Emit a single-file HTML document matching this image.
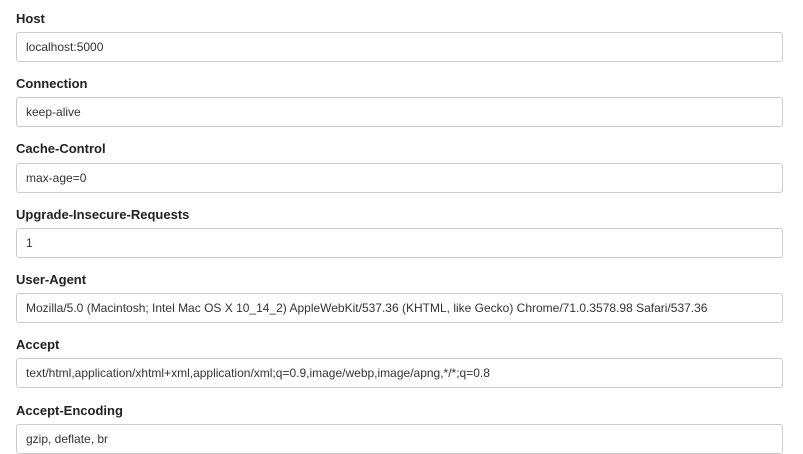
<!DOCTYPE html>
<html><head><style>
body{margin:0;width:803px;height:442px;overflow:hidden;background:#fff;font-family:"Liberation Sans",Arial,sans-serif;color:#222;position:relative}
.l{position:absolute;left:16px;font-size:13px;font-weight:bold;color:#222}
.i{position:absolute;left:16px;width:767px;border:1px solid #ccc;border-radius:3px;box-sizing:border-box;height:30px;font-size:12px;line-height:28px;padding-left:9px;color:#333}
</style></head><body>
<div class="l" style="top:11px">Host</div><div class="i" style="top:32px">localhost:5000</div>
<div class="l" style="top:76px">Connection</div><div class="i" style="top:97px">keep-alive</div>
<div class="l" style="top:141px">Cache-Control</div><div class="i" style="top:163px">max-age=0</div>
<div class="l" style="top:207px">Upgrade-Insecure-Requests</div><div class="i" style="top:228px">1</div>
<div class="l" style="top:272px">User-Agent</div><div class="i" style="top:293px">Mozilla/5.0 (Macintosh; Intel Mac OS X 10_14_2) AppleWebKit/537.36 (KHTML, like Gecko) Chrome/71.0.3578.98 Safari/537.36</div>
<div class="l" style="top:337px">Accept</div><div class="i" style="top:358px">text/html,application/xhtml+xml,application/xml;q=0.9,image/webp,image/apng,*/*;q=0.8</div>
<div class="l" style="top:403px">Accept-Encoding</div><div class="i" style="top:424px">gzip, deflate, br</div>
</body></html>
